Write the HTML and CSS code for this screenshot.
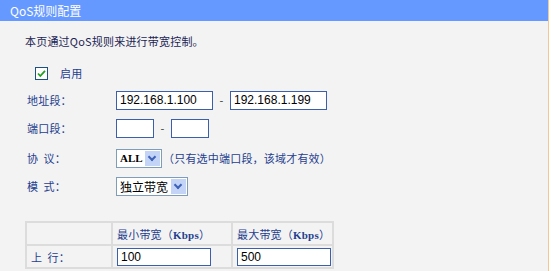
FILE: index.html
```html
<!DOCTYPE html>
<html lang="zh-CN">
<head>
  <meta charset="UTF-8">
  <title>QoS规则配置</title>
  <link rel="stylesheet" href="styles.css">
</head>
<body>
  <div class="page">
    <div class="title">QoS规则配置</div>
    <p class="intro">本页通过QoS规则来进行带宽控制。</p>

    <div class="row enable">
      <span class="check">
        <svg width="13" height="13" viewBox="0 0 13 13">
          <rect x="0.5" y="0.5" width="12" height="12" fill="#fff" stroke="#1c5180"/>
          <path d="M3 6.5 L5.3 9 L10 3.8" fill="none" stroke="#21a121" stroke-width="1.8"/>
        </svg>
      </span>
      <span class="label-on">启用</span>
    </div>

    <div class="row">
      <span class="label">地址段：</span>
      <input class="ip" type="text" value="192.168.1.100">
      <span class="dash">-</span>
      <input class="ip" type="text" value="192.168.1.199">
    </div>

    <div class="row">
      <span class="label">端口段：</span>
      <input class="port" type="text" value="">
      <span class="dash">-</span>
      <input class="port" type="text" value="">
    </div>

    <div class="row proto">
      <span class="label">协&nbsp;&nbsp;议：</span>
      <span class="select sel-all">ALL<span class="arrow"></span></span>
      <span class="hint">（只有选中端口段，该域才有效）</span>
    </div>

    <div class="row mode">
      <span class="label">模&nbsp;&nbsp;式：</span>
      <span class="select sel-mode">独立带宽<span class="arrow"></span></span>
    </div>

    <table class="bw">
      <colgroup>
        <col class="c1">
        <col class="c2">
        <col class="c3">
      </colgroup>
      <tr class="head">
        <td></td>
        <td>最小带宽（<b>Kbps</b>）</td>
        <td>最大带宽（<b>Kbps</b>）</td>
      </tr>
      <tr>
        <td>上&nbsp;&nbsp;行：</td>
        <td><input class="bw-in" type="text" value="100"></td>
        <td><input class="bw-in" type="text" value="500"></td>
      </tr>
    </table>
  </div>
</body>
</html>
```

FILE: styles.css
```css
body {
  margin: 0;
  background: #ffffff;
  font-family: "Noto Sans CJK SC", "Liberation Sans", sans-serif;
  font-size: 11px;
  letter-spacing: 0.2px;
}

.page {
  width: 548px;
  height: 271px;
  background: #f4f3f3;
  border-right: 1px solid #f2c890;
  overflow: hidden;
}

.title {
  height: 21px;
  line-height: 21px;
  background: #6699ff;
  color: #ffffff;
  padding-left: 10px;
  font-size: 12px;
  letter-spacing: 0;
}

.intro {
  margin: 12px 0 0 25px;
  line-height: 16px;
  color: #1b2553;
}

.row {
  display: flex;
  align-items: center;
  height: 28px;
  padding-left: 27px;
  color: #1f3f8f;
}

.row.enable {
  margin-top: 11px;
  height: 26px;
  padding-left: 35px;
}

.check {
  display: flex;
  width: 13px;
  height: 13px;
}

.label-on {
  margin-left: 12px;
}

.label {
  width: 89px;
}

input {
  box-sizing: border-box;
  height: 19px;
  border: 1px solid #3d5ea8;
  background: #ffffff;
  font-family: "Liberation Sans", sans-serif;
  font-size: 12px;
  letter-spacing: 0;
  padding: 0 3px;
  margin: 0;
  color: #000;
}

.ip {
  width: 97px;
}

.port {
  width: 38px;
}

.dash {
  width: 17px;
  text-align: center;
  color: #333;
}

.row.proto {
  margin-top: 2px;
}

.select {
  box-sizing: border-box;
  display: flex;
  align-items: center;
  height: 19px;
  border: 1px solid #7f9db9;
  background: #ffffff;
  color: #000;
  padding-left: 3px;
  font-size: 12px;
  letter-spacing: 0;
}

.sel-all {
  width: 46px;
  font-family: "Liberation Serif", serif;
  font-weight: bold;
  font-size: 11px;
}

.sel-mode {
  width: 72px;
}

.arrow {
  margin-left: auto;
  margin-right: 1px;
  width: 15px;
  height: 15px;
  background: #c4d4f6;
  position: relative;
}

.arrow::after {
  content: "";
  position: absolute;
  left: 4px;
  top: 3px;
  width: 4px;
  height: 4px;
  border-right: 2px solid #3d62b8;
  border-bottom: 2px solid #3d62b8;
  transform: rotate(45deg);
}

.hint {
  margin-left: 1px;
  color: #1f3f8f;
}

.bw {
  margin: 21px 0 0 25px;
  border-collapse: collapse;
  table-layout: fixed;
  width: 307px;
  color: #1f3f8f;
}

.bw .c1 {
  width: 86px;
}

.bw .c2 {
  width: 120px;
}

.bw .c3 {
  width: 101px;
}

.bw td {
  border: 2px solid #dcdcdc;
  height: 21px;
  padding: 0 0 0 4px;
  white-space: nowrap;
  overflow: hidden;
}

.bw b {
  font-family: "Liberation Serif", serif;
  font-size: 11px;
}

.bw-in {
  width: 94px;
  height: 18px;
}
```
